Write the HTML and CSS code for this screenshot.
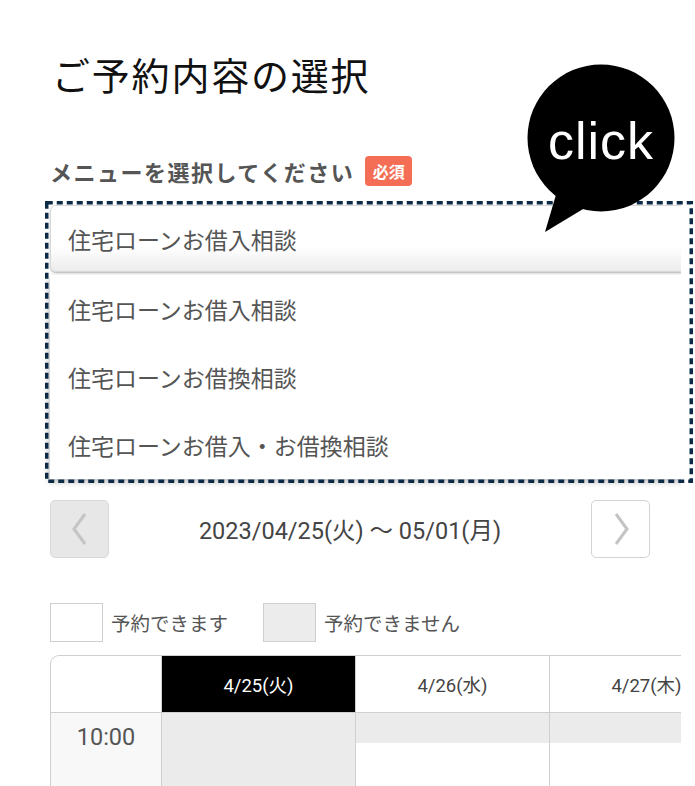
FILE: index.html
```html
<!DOCTYPE html>
<html lang="ja">
<head>
<meta charset="utf-8">
<title>ご予約内容の選択</title>
<link rel="stylesheet" href="styles.css">
</head>
<body>
<div class="page">
  <h1 class="title">ご予約内容の選択</h1>
  <div class="label-row">
    <span class="label">メニューを選択してください</span>
    <span class="badge">必須</span>
  </div>

  <div class="select-area">
    <div class="select-clip">
      <div class="select">住宅ローンお借入相談</div>
      <ul class="options">
        <li>住宅ローンお借入相談</li>
        <li>住宅ローンお借換相談</li>
        <li>住宅ローンお借入・お借換相談</li>
      </ul>
    </div>
    <svg class="dashed" width="648" height="282" viewBox="0 0 648 282">
      <rect x="1.75" y="1.75" width="644.5" height="278.5" fill="none" stroke="#0c2a46" stroke-width="3.5" stroke-dasharray="6 4"/>
    </svg>
  </div>

  <div class="week-nav">
    <button class="nav-btn prev" type="button" aria-label="前の週">
      <svg width="20" height="34" viewBox="0 0 20 34"><polyline points="15,2 4,17 15,32" fill="none" stroke="#c4c4c4" stroke-width="3"/></svg>
    </button>
    <span class="range">2023/04/25(火) 〜 05/01(月)</span>
    <button class="nav-btn next" type="button" aria-label="次の週">
      <svg width="20" height="34" viewBox="0 0 20 34"><polyline points="5,2 16,17 5,32" fill="none" stroke="#c4c4c4" stroke-width="3"/></svg>
    </button>
  </div>

  <div class="legend">
    <span class="swatch ok"></span><span class="legend-text">予約できます</span>
    <span class="swatch ng"></span><span class="legend-text">予約できません</span>
  </div>

  <div class="table-wrap">
    <table class="cal">
      <colgroup>
        <col class="c-time"><col class="c-day"><col class="c-day"><col class="c-day">
      </colgroup>
      <thead>
        <tr>
          <th class="corner"></th>
          <th class="today">4/25(火)</th>
          <th>4/26(水)</th>
          <th>4/27(木)</th>
        </tr>
      </thead>
      <tbody>
        <tr>
          <td class="time">10:00</td>
          <td class="full"></td>
          <td><div class="half"></div></td>
          <td><div class="half"></div></td>
        </tr>
      </tbody>
    </table>
  </div>

  <svg class="bubble" width="170" height="180" viewBox="0 0 170 180">
    <circle cx="81" cy="78" r="73.5" fill="#000"/>
    <polygon points="38,128 25,172 78,140" fill="#000"/>
    <text x="81" y="99" text-anchor="middle" class="bubble-text">click</text>
  </svg>
</div>
</body>
</html>
```
FILE: styles.css
```css
* { box-sizing: border-box; }

body {
  margin: 0;
  background: #fff;
  font-family: Roboto, "Noto Sans CJK JP", sans-serif;
  color: #444;
}

.page {
  position: relative;
  width: 681px;
  padding: 51px 0 40px 50px;
}

.title {
  margin: 0 0 0 2px;
  font-family: "Noto Sans CJK JP", sans-serif;
  font-weight: 400;
  font-size: 38px;
  line-height: 46px;
  letter-spacing: 1.8px;
  color: #111;
}

.label-row {
  display: flex;
  align-items: center;
  height: 30px;
  margin-top: 59px;
}

.label {
  font-family: "Noto Sans CJK JP", sans-serif;
  font-size: 22px;
  font-weight: 700;
  letter-spacing: 1.5px;
  color: #555;
}

.badge {
  margin-left: 11px;
  width: 47px;
  height: 30px;
  border-radius: 4px;
  background: #f36e55;
  color: #fff;
  font-family: "Noto Sans CJK JP", sans-serif;
  font-size: 16px;
  font-weight: 700;
  display: flex;
  align-items: center;
  justify-content: center;
}

.select-area {
  position: relative;
  margin: 19px 0 0 -10px;
}

.select-clip {
  width: 641px;
  overflow: hidden;
  padding: 0 0 10px 10px;
}

.select {
  width: 660px;
  height: 67px;
  border: 1px solid #d8d8d8;
  border-radius: 6px;
  padding-left: 17px;
  display: flex;
  align-items: center;
  font-size: 23px;
  color: #555;
  background: linear-gradient(#fff 62%, #ececec);
  box-shadow: 0 1px 2px rgba(0, 0, 0, 0.3);
}

.options {
  list-style: none;
  margin: 3px 0 0;
  padding: 0;
  width: 660px;
  background: #fff;
  box-shadow: -1px 3px 6px rgba(0, 0, 0, 0.28);
}

.options li {
  height: 68px;
  display: flex;
  align-items: center;
  padding-left: 18px;
  font-size: 23px;
  color: #555;
}

.dashed {
  position: absolute;
  left: 5px;
  top: -4px;
}

.week-nav {
  width: 600px;
  height: 58px;
  margin-top: 11px;
  display: flex;
  align-items: center;
  justify-content: space-between;
}

.nav-btn {
  width: 59px;
  height: 58px;
  padding: 0;
  border-radius: 5px;
  display: flex;
  align-items: center;
  justify-content: center;
  cursor: pointer;
}

.nav-btn.prev {
  background: #e7e7e7;
  border: 1px solid #d9d9d9;
}

.nav-btn.next {
  background: #fff;
  border: 1px solid #d3d3d3;
}

.range {
  font-size: 23.5px;
  color: #444;
}

.legend {
  display: flex;
  align-items: center;
  margin-top: 45px;
  height: 39px;
}

.swatch {
  width: 53px;
  height: 39px;
  border: 1px solid #cfcfcf;
}

.swatch.ok { background: #fff; }
.swatch.ng { background: #ececec; margin-left: 35px; }

.legend-text {
  margin-left: 8px;
  font-size: 19.5px;
  color: #555;
}

.table-wrap {
  width: 631px;
  margin-top: 13px;
  overflow: hidden;
}

.cal {
  table-layout: fixed;
  width: 694px;
  border-collapse: separate;
  border-spacing: 0;
  border-top: 1px solid #cfcfcf;
  border-left: 1px solid #cfcfcf;
  border-top-left-radius: 9px;
}

.c-time { width: 111px; }
.c-day { width: 194px; }

.cal th,
.cal td {
  border-right: 1px solid #cfcfcf;
  border-bottom: 1px solid #cfcfcf;
  padding: 0;
}

.cal th {
  height: 57px;
  font-size: 18.5px;
  font-weight: 400;
  color: #444;
  text-align: center;
  white-space: nowrap;
}

.cal th.corner { border-top-left-radius: 8px; }

.cal th.today {
  background: #000;
  color: #fff;
}

.cal td {
  height: 100px;
  vertical-align: top;
}

.cal td.time {
  background: #f8f8f8;
  padding-top: 10px;
  text-align: center;
  font-size: 23.5px;
  line-height: 28px;
  color: #555;
}

.cal td.full { background: #ebebeb; }

.half {
  height: 30px;
  background: #ebebeb;
}

.bubble {
  position: absolute;
  left: 520px;
  top: 60px;
}

.bubble-text {
  fill: #fff;
  font-family: "Liberation Sans", Arial, sans-serif;
  font-size: 52px;
  letter-spacing: 1px;
}
```
